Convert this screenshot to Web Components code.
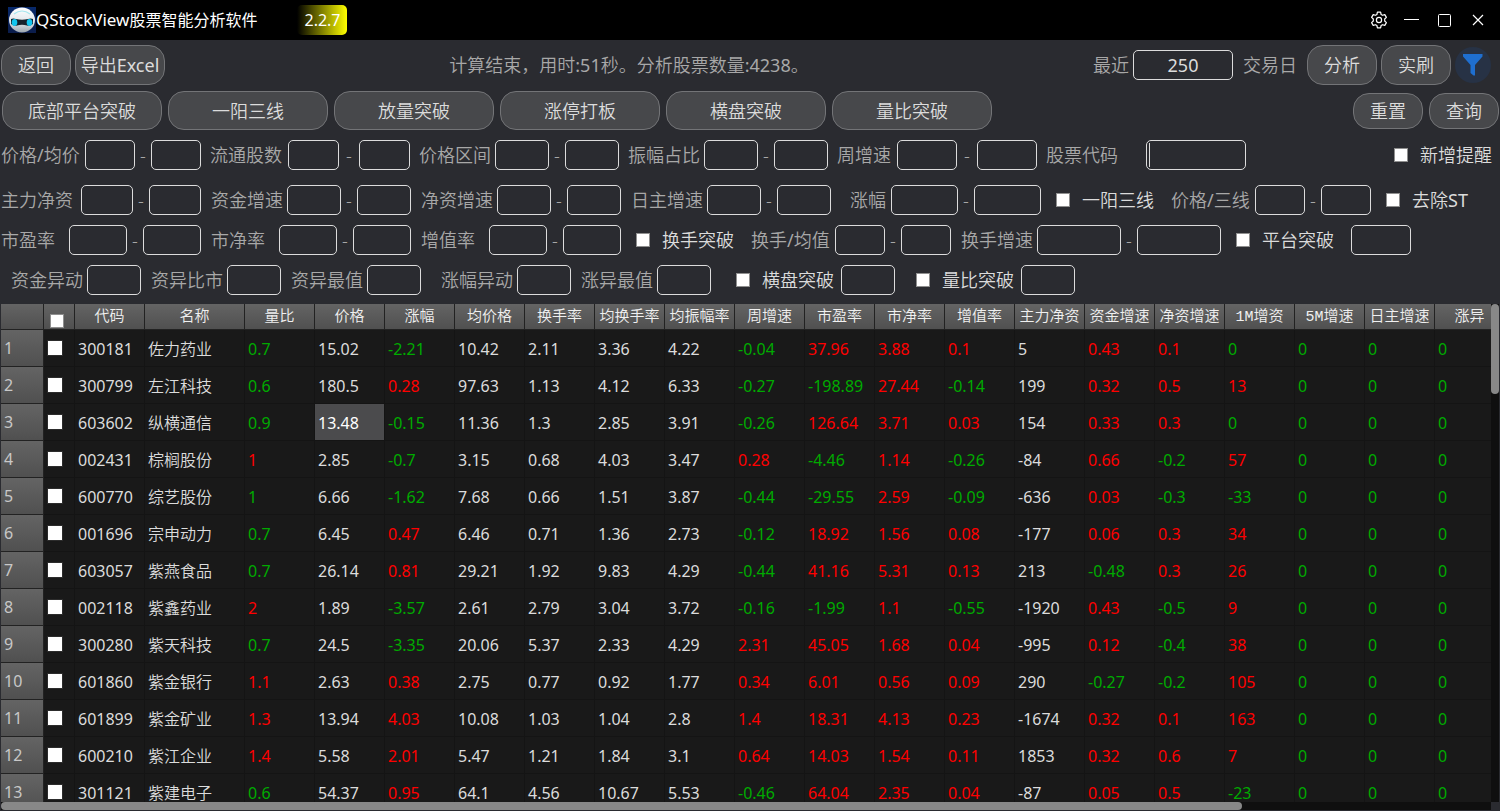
<!DOCTYPE html>
<html lang="zh-CN">
<head>
<meta charset="utf-8">
<title>QStockView股票智能分析软件</title>
<style>
  html, body { margin: 0; height: 100%; background: #2a2b30; overflow: hidden; }
  body { font: 18px/24px "Noto Sans", "Noto Sans CJK SC", sans-serif; }
</style>
</head>
<body>
<qs-app></qs-app>
<script>
const define = (name, html, setup) => {
  const tpl = document.createElement('template');
  tpl.innerHTML = html;
  customElements.define(name, class extends HTMLElement {
    connectedCallback() {
      if (this.shadowRoot) return;
      this.attachShadow({ mode: 'open' }).append(tpl.content.cloneNode(true));
      if (setup) setup(this, this.shadowRoot);
    }
  });
};

/* pill button */
define('qs-button', `
<style>
  :host { display: block; flex: 0 0 auto; width: 70px; height: 40px; }
  button { box-sizing: border-box; width: 100%; height: 100%; padding: 0; border: 1px solid #737477; border-radius: 16px;
    background: #47484b; color: #dcdcdc; font: inherit; font-weight: 350; white-space: nowrap; }
</style>
<button type="button"><slot></slot></button>`);

/* tick box with its label */
define('qs-check', `
<style>
  :host { display: block; flex: 0 0 auto; padding-left: 6px; color: #dcdcdc; font-weight: 350; }
  label { display: flex; align-items: center; gap: 12px; white-space: nowrap; }
  input { appearance: none; box-sizing: border-box; width: 14px; height: 14px; margin: 0; background: #fff; border: 1px solid #8f8f8f; }
</style>
<label><input type="checkbox"><slot></slot></label>`);

/* single text box, the label stands on its left */
define('qs-field', `
<style>
  :host { display: block; flex: 0 0 auto; color: #a8a8a8; font-weight: 350; }
  label { display: flex; align-items: center; justify-content: space-between; white-space: nowrap; }
  span { padding-left: var(--indent, 1px); }
  input { box-sizing: border-box; width: var(--box, 54px); height: 30px; margin: 0; padding: 0 2px; border: 1px solid #dcdcdc;
    border-radius: 5px; background: #2a2b30; color: #dcdcdc; font: inherit; font-weight: 400; text-align: var(--align, left); outline: 0; }
  :host([active]) input { background: linear-gradient(#dcdcdc, #dcdcdc) 2px 2px / 1px 24px no-repeat #2a2b30; }
</style>
<label><span><slot></slot></span><input type="text"></label>`, (el, root) => {
  const input = root.querySelector('input');
  input.value = el.getAttribute('value') || '';
  if (el.hasAttribute('label')) input.setAttribute('aria-label', el.getAttribute('label'));
});

/* from - to pair of text boxes */
define('qs-range', `
<style>
  :host { display: flex; flex: 0 0 auto; align-items: center; width: 201px; color: #a8a8a8; font-weight: 350; }
  label { flex: 1; white-space: nowrap; padding-left: var(--indent, 1px); }
  .dash { width: var(--dash, 16px); text-align: center; }
  input { box-sizing: border-box; width: var(--box, 54px); height: 30px; margin: 0; padding: 0 2px; border: 1px solid #dcdcdc;
    border-radius: 5px; background: #2a2b30; color: #dcdcdc; font: inherit; }
</style>
<label for="from"><slot></slot></label><input id="from" type="text"><span class="dash">-</span><input type="text" aria-label="上限">`);

/* window title bar */
define('qs-titlebar', `
<style>
  :host { display: flex; align-items: center; height: 40px; padding: 0 11px 0 8px; background: #000; color: #fff; font-size: 16px; }
  .logo { width: 28px; height: 26px; }
  .name { min-width: 220px; }
  .latin { font-size: 17px; }
  .version { box-sizing: border-box; width: 50px; height: 30px; margin-left: 40px; padding-left: 7px; border-radius: 5px; line-height: 30px;
    background: linear-gradient(90deg, #000, #ff0); }
  .tools { display: flex; gap: 10px; margin-left: auto; }
  button { width: 23px; height: 24px; padding: 0; border: 0; background: none; color: #fff; display: grid; place-items: center; }
  .tools svg { display: block; fill: none; stroke: currentColor; }
</style>
<svg class="logo" viewBox="0 0 28 26" aria-hidden="true">
  <defs>
    <linearGradient id="b" x2="0" y2="1"><stop offset="0" stop-color="#08296b"/><stop offset="1" stop-color="#0b1c4a"/></linearGradient>
    <linearGradient id="h" x2="0" y2="1"><stop offset="0" stop-color="#fff"/><stop offset=".6" stop-color="#dfe5ea"/><stop offset="1" stop-color="#9ba5ad"/></linearGradient>
  </defs>
  <rect width="28" height="26" fill="url(#b)"/>
  <ellipse cx="14" cy="13" rx="13" ry="12.5" fill="url(#h)"/>
  <path d="M6 7Q14 1 22 7" fill="none" stroke="#a6e6ee" stroke-width="1.2"/>
  <path d="M3 12Q5 11 8 12Q14 13.500 20 12Q23 11 25 12L25 17Q22 19.500 19 18.500Q14 17 9 18.500Q6 19.500 3 17Z" fill="#15212b"/>
  <ellipse cx="6.500" cy="15.500" rx="2.800" ry="3.400" fill="#12c5ee"/><ellipse cx="21.500" cy="15.500" rx="2.800" ry="3.400" fill="#12c5ee"/>
</svg>
<span class="name"><span class="latin">QStockView</span>股票智能分析软件</span>
<span class="version">2.2.7</span>
<div class="tools">
  <button type="button" aria-label="设置"><svg width="18" height="18" viewBox="0 0 18 18" stroke-width="1.200" stroke-linejoin="round">
    <path d="M7.400 1.200h3.200l.5 2.300 1.400.8 2.300-.7 1.600 2.800-1.700 1.600v2l1.700 1.600-1.600 2.800-2.300-.7-1.400.8-.5 2.300H7.400l-.5-2.300-1.400-.8-2.300.7-1.600-2.800L3.300 10V8L1.600 6.400l1.600-2.800 2.300.7 1.400-.8z"/><circle cx="9" cy="9" r="2.600"/></svg></button>
  <button type="button" aria-label="最小化"><svg width="16" height="14" viewBox="0 0 16 14"><path d="M0 6.500h15"/></svg></button>
  <button type="button" aria-label="最大化"><svg width="13" height="13" viewBox="0 0 13 13"><rect x=".5" y=".5" width="12" height="12" rx="1"/></svg></button>
  <button type="button" aria-label="关闭"><svg width="12" height="12" viewBox="0 0 12 12" stroke-width="1.200"><path d="M1 1l10 10M11 1L1 11"/></svg></button>
</div>`);

/* analysis controls and preset strategies */
define('qs-toolbar', `
<style>
  :host { display: block; }
  div { display: flex; align-items: center; }
  .main { gap: 4px; padding: 5px 9px 0 1px; }
  .presets { gap: 6px; padding: 6px 1px 0 2px; }
  .status { flex: 1; text-align: center; color: #a8a8a8; font-weight: 350; }
  .latin { font-weight: 400; }
  .main qs-field { width: 140px; --box: 100px; --align: center; --indent: 0; }
  .unit { margin: 0 6px; color: #a8a8a8; font-weight: 350; }
  .export { width: 90px; }
  .presets qs-button { width: 160px; height: 39px; }
  .presets .short { width: 70px; height: 36px; }
  .push { margin-left: auto; }
  .filter { width: 36px; height: 36px; padding: 0; border: 0; border-radius: 18px; background: #273245; }
  .filter svg { display: block; margin: auto; }
</style>
<div class="main">
  <qs-button>返回</qs-button><qs-button class="export">导出<span class="latin">Excel</span></qs-button>
  <span class="status">计算结束，用时<span class="latin">:51</span>秒。分析股票数量<span class="latin">:4238</span>。</span>
  <qs-field value="250">最近</qs-field><span class="unit">交易日</span>
  <qs-button>分析</qs-button><qs-button>实刷</qs-button>
  <button class="filter" type="button" aria-label="筛选"><svg width="22" height="24" viewBox="0 0 22 24"><path d="M1 1h19.500v2.500L13 12v10.500h-1.500L8.500 20v-8L1 3.500z" fill="#1f6fd0"/></svg></button>
</div>
<div class="presets">
  <qs-button>底部平台突破</qs-button><qs-button>一阳三线</qs-button><qs-button>放量突破</qs-button>
  <qs-button>涨停打板</qs-button><qs-button>横盘突破</qs-button><qs-button>量比突破</qs-button>
  <qs-button class="short push">重置</qs-button><qs-button class="short">查询</qs-button>
</div>`);

/* screening conditions */
define('qs-filters', `
<style>
  :host { display: flex; flex-direction: column; gap: 10px; padding: 10px 8px 9px 0; }
  .row { display: flex; align-items: center; gap: 9px; height: 30px; }
  .first { gap: 8px; margin-bottom: 5px; }
  .last { padding-left: 10px; }
  .last qs-field { width: 131px; }
  .last .wide { margin-left: 10px; }
  .push { margin-left: auto; }
  .b50 { --box: 50px; } .b52 { --box: 52px; } .b58 { --box: 58px; } .b60 { --box: 60px; --dash: 20px; }
  .b51 { --box: 51px; --dash: 20px; }
  .b67 { --box: 67px; --indent: 10px; }
  .b84 { --box: 84px; width: 261px; }
  .code { --box: 100px; width: 201px; }
  .narrow { width: 105px; }
  .row .bare { width: 54px; --box: 54px; --indent: 0; }
  .last .tick { width: 99px; margin: 0 -9px 0 10px; }
  .last .bare { margin-left: 6px; }
  .last .bare + .tick { margin-left: 6px; }
  .row .bare.mid { width: 60px; --box: 60px; margin-left: 1px; }
  .latin { font-weight: 400; }
</style>
<div class="row first">
  <qs-range class="b50">价格<span class="latin">/</span>均价</qs-range><qs-range class="b51">流通股数</qs-range><qs-range>价格区间</qs-range>
  <qs-range>振幅占比</qs-range><qs-range class="b60">周增速</qs-range><qs-field class="code" active>股票代码</qs-field>
  <qs-check class="push">新增提醒</qs-check>
</div>
<div class="row">
  <qs-range class="b52">主力净资</qs-range><qs-range>资金增速</qs-range><qs-range>净资增速</qs-range><qs-range>日主增速</qs-range>
  <qs-range class="b67">涨幅</qs-range><qs-check class="narrow">一阳三线</qs-check><qs-range class="b50">价格<span class="latin">/</span>三线</qs-range><qs-check><span>去除<span class="latin">ST</span></span></qs-check>
</div>
<div class="row">
  <qs-range class="b58">市盈率</qs-range><qs-range class="b58">市净率</qs-range><qs-range class="b58">增值率</qs-range>
  <qs-check class="narrow">换手突破</qs-check><qs-range class="b50">换手<span class="latin">/</span>均值</qs-range><qs-range class="b84">换手增速</qs-range>
  <qs-check class="narrow">平台突破</qs-check><qs-field class="bare mid" label="平台突破值"></qs-field>
</div>
<div class="row last">
  <qs-field>资金异动</qs-field><qs-field>资异比市</qs-field><qs-field>资异最值</qs-field>
  <qs-field class="wide">涨幅异动</qs-field><qs-field>涨异最值</qs-field>
  <qs-check class="tick">横盘突破</qs-check><qs-field class="bare" label="横盘突破值"></qs-field>
  <qs-check class="tick">量比突破</qs-check><qs-field class="bare" label="量比突破值"></qs-field>
</div>`);

/* result table */
const HEADS = '代码 名称 量比 价格 涨幅 均价格 换手率 均换手率 均振幅率 周增速 市盈率 市净率 增值率 主力净资 资金增速 净资增速 1M增资 5M增速 日主增速 涨异'.split(' ');
const ROWS = `300181 佐力药业 0.7 15.02 -2.21 10.42 2.11 3.36 4.22 -0.04 37.96 3.88 0.1 5 0.43 0.1 0
300799 左江科技 0.6 180.5 0.28 97.63 1.13 4.12 6.33 -0.27 -198.89 27.44 -0.14 199 0.32 0.5 13
603602 纵横通信 0.9 13.48 -0.15 11.36 1.3 2.85 3.91 -0.26 126.64 3.71 0.03 154 0.33 0.3 0
002431 棕榈股份 1 2.85 -0.7 3.15 0.68 4.03 3.47 0.28 -4.46 1.14 -0.26 -84 0.66 -0.2 57
600770 综艺股份 1 6.66 -1.62 7.68 0.66 1.51 3.87 -0.44 -29.55 2.59 -0.09 -636 0.03 -0.3 -33
001696 宗申动力 0.7 6.45 0.47 6.46 0.71 1.36 2.73 -0.12 18.92 1.56 0.08 -177 0.06 0.3 34
603057 紫燕食品 0.7 26.14 0.81 29.21 1.92 9.83 4.29 -0.44 41.16 5.31 0.13 213 -0.48 0.3 26
002118 紫鑫药业 2 1.89 -3.57 2.61 2.79 3.04 3.72 -0.16 -1.99 1.1 -0.55 -1920 0.43 -0.5 9
300280 紫天科技 0.7 24.5 -3.35 20.06 5.37 2.33 4.29 2.31 45.05 1.68 0.04 -995 0.12 -0.4 38
601860 紫金银行 1.1 2.63 0.38 2.75 0.77 0.92 1.77 0.34 6.01 0.56 0.09 290 -0.27 -0.2 105
601899 紫金矿业 1.3 13.94 4.03 10.08 1.03 1.04 2.8 1.4 18.31 4.13 0.23 -1674 0.32 0.1 163
600210 紫江企业 1.4 5.58 2.01 5.47 1.21 1.84 3.1 0.64 14.03 1.54 0.11 1853 0.32 0.6 7
301121 紫建电子 0.6 54.37 0.95 64.1 4.56 10.67 5.53 -0.46 64.04 2.35 0.04 -87 0.05 0.5 -23`
  .split('\n').map(line => [...line.split(' '), '0', '0', '0']);
const PLAIN = new Set([0, 1, 3, 5, 6, 7, 8, 13]);
const tone = (r, c, v) => {
  if (PLAIN.has(c)) return '';
  if (c === 2) return v > 1 || r === 3 ? 'up' : 'down';
  return v > 0 ? 'up' : 'down';
};

define('qs-table', `
<style>
  :host { display: grid; grid-template: minmax(0, 1fr) 8px / minmax(0, 1fr) 8px; flex: 1; min-height: 0; padding: 0 1px 1px; }
  .view { overflow: auto; scrollbar-width: none; background: #191919; }
  table { table-layout: fixed; border-collapse: separate; border-spacing: 0; width: 1504px; font-size: 16px; line-height: 24px; color: #dcdcdc; }
  col.num { width: 43px; } col.tick { width: 31px; } col.name { width: 100px; } col { width: 70px; }
  th, td { box-sizing: border-box; padding: 0; white-space: nowrap; overflow: hidden; border-right: 1px solid #141414; border-bottom: 1px solid #141414; }
  thead th { height: 26px; padding-top: 3px; font: 350 15px/22px "Liberation Mono", "Noto Sans CJK SC", monospace; color: #f0f0f0;
    background: linear-gradient(#646464, #505050); border-color: #222; }
  tbody th { height: 37px; padding-left: 3px; text-align: left; font-weight: 400; color: #c8c8c8; background: linear-gradient(#646464, #505050); border-color: #222; }
  td { padding: 2px 0 0 3px; }
  td.pick { padding-top: 0; }
  td.name { font-weight: 350; }
  .up { color: #f00; } .down { color: #00aa00; }
  .sel { background: #4b4b4d; color: #fff; }
  input { appearance: none; display: block; box-sizing: border-box; width: 16px; height: 16px; margin: 0; background: #fff; border: 1px solid #2c2c2c; }
  thead input { width: 14px; height: 14px; margin: 5px 0 0 6px; border-color: #8f8f8f; }
  .track { background: #0f0f0f; }
  .thumb { background: #888; border-radius: 4px; }
  .v .thumb { height: 18%; } .h .thumb { width: calc(83% + 4px); height: 100%; }
</style>
<div class="view"><table>
  <colgroup><col class="num"><col class="tick"><col><col class="name"></colgroup>
  <thead><tr><th></th><th><input type="checkbox" aria-label="全选"></th></tr></thead><tbody></tbody>
</table></div>
<div class="track v"><div class="thumb"></div></div>
<div class="track h"><div class="thumb"></div></div>`, (el, root) => {
  root.querySelector('colgroup').insertAdjacentHTML('beforeend', '<col>'.repeat(18));
  root.querySelector('thead tr').insertAdjacentHTML('beforeend', HEADS.map(h => `<th scope="col">${h}</th>`).join(''));
  root.querySelector('tbody').innerHTML = ROWS.map((row, r) =>
    `<tr><th scope="row">${r + 1}</th><td class="pick"><input type="checkbox" aria-label="选择${row[1]}"></td>` +
    row.map((v, c) => `<td class="${c === 1 ? 'name' : r === 2 && c === 3 ? 'sel' : tone(r, c, v)}">${v}</td>`).join('') + '</tr>').join('');
});

define('qs-app', `
<style>:host { display: flex; flex-direction: column; height: 100vh; background: #2a2b30; }</style>
<qs-titlebar></qs-titlebar><qs-toolbar></qs-toolbar><qs-filters></qs-filters><qs-table></qs-table>`);
</script>
</body>
</html>
